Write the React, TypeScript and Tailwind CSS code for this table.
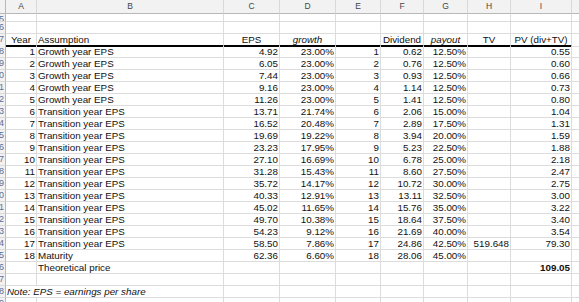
import clsx from 'clsx';

type Row = [string, string, string, string, string, string, string, string, string];

const rows: Row[] = [
  ['1', 'Growth year EPS', '4.92', '23.00%', '1', '0.62', '12.50%', '', '0.55'],
  ['2', 'Growth year EPS', '6.05', '23.00%', '2', '0.76', '12.50%', '', '0.60'],
  ['3', 'Growth year EPS', '7.44', '23.00%', '3', '0.93', '12.50%', '', '0.66'],
  ['4', 'Growth year EPS', '9.16', '23.00%', '4', '1.14', '12.50%', '', '0.73'],
  ['5', 'Growth year EPS', '11.26', '23.00%', '5', '1.41', '12.50%', '', '0.80'],
  ['6', 'Transition year EPS', '13.71', '21.74%', '6', '2.06', '15.00%', '', '1.04'],
  ['7', 'Transition year EPS', '16.52', '20.48%', '7', '2.89', '17.50%', '', '1.31'],
  ['8', 'Transition year EPS', '19.69', '19.22%', '8', '3.94', '20.00%', '', '1.59'],
  ['9', 'Transition year EPS', '23.23', '17.95%', '9', '5.23', '22.50%', '', '1.88'],
  ['10', 'Transition year EPS', '27.10', '16.69%', '10', '6.78', '25.00%', '', '2.18'],
  ['11', 'Transition year EPS', '31.28', '15.43%', '11', '8.60', '27.50%', '', '2.47'],
  ['12', 'Transition year EPS', '35.72', '14.17%', '12', '10.72', '30.00%', '', '2.75'],
  ['13', 'Transition year EPS', '40.33', '12.91%', '13', '13.11', '32.50%', '', '3.00'],
  ['14', 'Transition year EPS', '45.02', '11.65%', '14', '15.76', '35.00%', '', '3.22'],
  ['15', 'Transition year EPS', '49.70', '10.38%', '15', '18.64', '37.50%', '', '3.40'],
  ['16', 'Transition year EPS', '54.23', '9.12%', '16', '21.69', '40.00%', '', '3.54'],
  ['17', 'Transition year EPS', '58.50', '7.86%', '17', '24.86', '42.50%', '519.648', '79.30'],
  ['18', 'Maturity', '62.36', '6.60%', '18', '28.06', '45.00%', '', ''],
];

const cols = 'grid grid-cols-[6px_31px_187px_56px_56px_45px_43px_44px_43px_61px_7px]';
const letters = ['A', 'B', 'C', 'D', 'E', 'F', 'G', 'H', 'I'];

const RowHead = ({ n }: { n: number }) => (
  <div className="flex justify-end overflow-hidden border-r border-b border-r-[#b8b8b8] border-b-[#d9d9d9] bg-[#f2f2f2] text-[9px] leading-[11px] text-[#5d6f95]">
    <span className="whitespace-nowrap pr-px">{n}</span>
  </div>
);

const Cell = ({
  children,
  right = false,
  center = false,
  className = '',
}: {
  children?: React.ReactNode;
  right?: boolean;
  center?: boolean;
  className?: string;
}) => (
  <div
    className={clsx(
      'whitespace-nowrap border-r border-b border-[#dcdcdc] leading-[11px]',
      right && 'pr-px text-right',
      center && 'text-center',
      !right && !center && 'pl-px',
      className
    )}
  >
    {children}
  </div>
);

const Blank = ({ n, h = 'h-[12px]' }: { n: number; h?: string }) => (
  <div className={clsx(cols, h)}>
    <RowHead n={n} />
    {letters.map((l) => (
      <Cell key={l} />
    ))}
    <div className="border-b border-[#dcdcdc]" />
  </div>
);

export default function App() {
  return (
    <div className="h-[302px] w-[579px] overflow-hidden bg-white font-['Liberation_Sans',Arial,sans-serif] text-[9.8px] text-[#111]">
      {/* column letters */}
      <div className={clsx(cols, 'h-[14px] bg-[#f2f2f2]')}>
        <div className="border-r border-b border-r-[#b8b8b8] border-b-[#b8b8b8]" />
        {letters.map((l) => (
          <div
            key={l}
            className="border-r border-b border-r-[#d9d9d9] border-b-[#b8b8b8] text-center text-[8.5px] leading-[13px] text-[#444]"
          >
            {l}
          </div>
        ))}
        <div className="border-b border-[#b8b8b8]" />
      </div>

      <Blank n={5} h="h-[8px]" />
      <Blank n={6} />

      {/* table heading */}
      <div className={clsx(cols, 'h-[12px]')}>
        <RowHead n={7} />
        <Cell center className="border-b-2 border-b-black">Year</Cell>
        <Cell className="border-b-2 border-b-black">Assumption</Cell>
        <Cell center className="border-b-2 border-b-black">EPS</Cell>
        <Cell center className="border-b-2 border-b-black italic">growth</Cell>
        <Cell className="border-b-2 border-b-black" />
        <Cell center className="border-b-2 border-b-black">Dividend</Cell>
        <Cell center className="border-b-2 border-b-black italic">payout</Cell>
        <Cell center className="border-b-2 border-b-black">TV</Cell>
        <Cell center className="border-b-2 border-b-black">PV (div+TV)</Cell>
        <div className="border-b border-[#dcdcdc]" />
      </div>

      {rows.map((r, i) => (
        <div key={r[0]} className={clsx(cols, 'h-[12px]')}>
          <RowHead n={i + 8} />
          <Cell right>{r[0]}</Cell>
          <Cell>{r[1]}</Cell>
          {r.slice(2).map((v, j) => (
            <Cell key={j} right>
              {v}
            </Cell>
          ))}
          <div className="border-b border-[#dcdcdc]" />
        </div>
      ))}

      <div className={clsx(cols, 'h-[12px]')}>
        <RowHead n={26} />
        <Cell />
        <Cell>Theoretical price</Cell>
        <Cell />
        <Cell />
        <Cell />
        <Cell />
        <Cell />
        <Cell />
        <Cell right className="font-bold">109.05</Cell>
        <div className="border-b border-[#dcdcdc]" />
      </div>

      <Blank n={27} />

      <div className={clsx(cols, 'h-[12px]')}>
        <RowHead n={28} />
        <Cell className="col-span-2 italic">Note: EPS = earnings per share</Cell>
        <Cell />
        <Cell />
        <Cell />
        <Cell />
        <Cell />
        <Cell />
        <Cell />
        <div className="border-b border-[#dcdcdc]" />
      </div>

      <Blank n={29} />
    </div>
  );
}
